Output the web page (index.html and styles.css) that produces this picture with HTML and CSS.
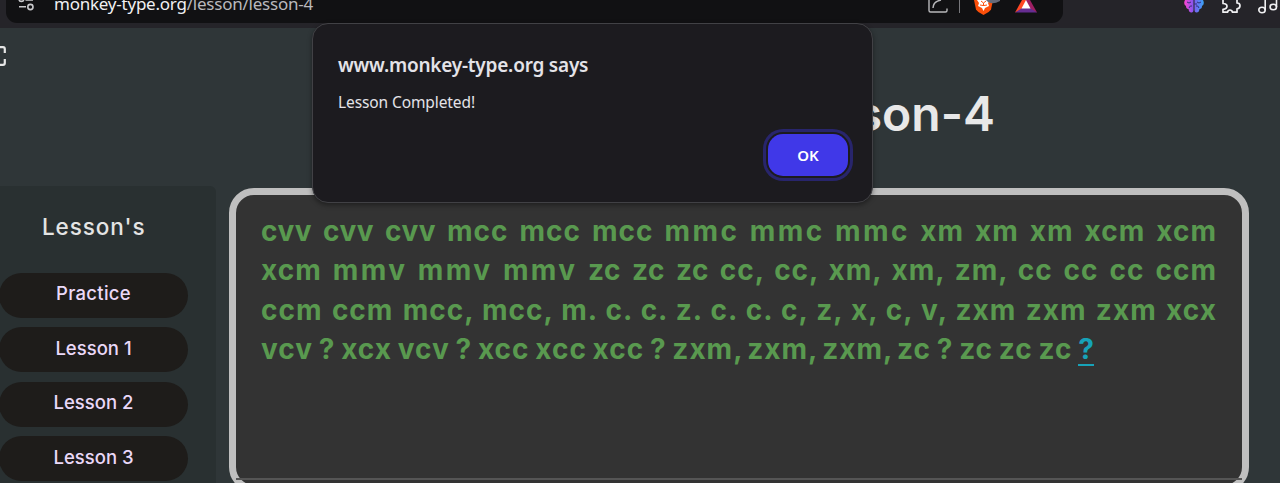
FILE: index.html
```html
<!DOCTYPE html>
<html lang="en">
<head>
<meta charset="utf-8">
<title>Lesson-4</title>
<link rel="stylesheet" href="styles.css">
</head>
<body>
<header class="toolbar">
  <div class="address">
    <svg class="tune" width="17" height="12" viewBox="0 0 17 12" fill="none" stroke="#c9c9cc" stroke-width="1.6"><circle cx="3.4" cy="-1" r="2.4"/><path d="M7.5 0H15M1 6.8H8"/><circle cx="12.4" cy="7" r="2.6"/></svg>
    <span class="url">monkey-type.org<span class="path">/lesson/lesson-4</span></span>
    <svg class="share" width="20" height="14" viewBox="0 0 20 14" fill="none" stroke="#b8b8bb" stroke-width="1.4"><path d="M1 0V10.5Q1 12 2.5 12H17.5Q19 12 19 10.5V8.5M5 8C5 4 8 1 13 0"/></svg>
    <span class="divider"></span>
    <svg class="shield" width="29" height="16" viewBox="0 0 29 16"><path d="M0 0L2 9.5Q3 11.5 9.500 15Q16 11.500 17 9.500L19 0Z" fill="#fb4f0a"/><path d="M3 0L5 3L4 6L8 8L9.500 11L11 8L15 6L14 3L16 0Z" fill="#fff"/><path d="M7 1L9.500 3L12 1M6 5L9 5.500M13 5L10 5.500M9.500 3V6" stroke="#fb4f0a" fill="none"/><path d="M12 0Q17 6 26 1V0Z" fill="#666a78"/></svg>
    <svg class="prism" width="22" height="13" viewBox="0 0 22 13"><path d="M7 0L0 12.600L11 8V0Z" fill="#ff4724"/><path d="M15 0L22 12.600L11 8V0Z" fill="#9e1f63"/><path d="M0 12.600H22L15 8H7Z" fill="#662d91"/><path d="M11 0L15.500 8.500H6.500Z" fill="#fff"/></svg>
  </div>
  <svg class="brain" width="20" height="14" viewBox="0 0 20 14"><defs><linearGradient id="bg"><stop offset="0" stop-color="#ff44cf"/><stop offset=".45" stop-color="#8655f0"/><stop offset="1" stop-color="#38a4f5"/></linearGradient></defs><path d="M1 0Q-1 4 2 6Q2 9 4.500 9Q5 13 8 12.500Q9.500 12 9.500 10V0ZM10.500 0V10Q10.500 12 12 12.500Q15 13 15.500 9Q18 9 18 6Q21 4 19 0Z" fill="url(#bg)"/><path d="M3 2Q5 4 7 2M5 8Q6 5 8 6M17 2Q15 4 13 2M15 8Q14 5 12 6M10 4H13" fill="none" stroke="#33317c"/></svg>
  <svg class="puzzle" width="20" height="14" viewBox="0 0 20 14" fill="none" stroke="#f0f0f2" stroke-width="1.700" stroke-linejoin="round"><path d="M2 0V3.500Q6 3.500 6 6.300Q6 9 2 9.300V12.200H6.500Q7 10 9 10Q11 10 11.500 12.200H16V8.800Q19 8.500 19 5.800Q19 3 16 3V0"/></svg>
  <svg class="music" width="22" height="14" viewBox="0 0 22 14" fill="none" stroke="#f0f0f2" stroke-width="1.600"><ellipse cx="4" cy="10" rx="3.200" ry="2.700"/><path d="M7.200 10V0M18.500 7V0"/><ellipse cx="15.300" cy="7" rx="3.200" ry="2.700"/></svg>
</header>

<main class="page">
  <aside class="side">
    <svg class="fullscreen" width="6" height="20" viewBox="0 0 6 20" fill="none" stroke="#e6e6e6" stroke-width="2.200"><path d="M0 1.200H3Q4.800 1.200 4.800 3V7M4.800 13V17Q4.800 18.800 3 18.800H0"/></svg>
    <nav class="lessons">
      <h2 class="lessons-title">Lesson's</h2>
      <button class="lesson practice">Practice</button>
      <button class="lesson">Lesson 1</button>
      <button class="lesson">Lesson 2</button>
      <button class="lesson">Lesson 3</button>
    </nav>
  </aside>
  <section class="content">
    <h1 class="title">Lesson-4</h1>
    <div class="panel">
      <div class="line"><span class="tight">cvv</span><span class="tight">cvv</span><span class="tight">cvv</span><span>mcc</span><span>mcc</span><span>mcc</span><span class="wide">mmc</span><span class="wide">mmc</span><span class="wide">mmc</span><span>xm</span><span>xm</span><span>xm</span><span>xcm</span><span>xcm</span></div>
      <div class="line"><span>xcm</span><span class="wide">mmv</span><span class="wide">mmv</span><span class="wide">mmv</span><span class="tight">zc</span><span class="tight">zc</span><span class="tight">zc</span><span class="p">cc,</span><span class="p">cc,</span><span class="p">xm,</span><span class="p">xm,</span><span class="p">zm,</span><span>cc</span><span>cc</span><span>cc</span><span>ccm</span></div>
      <div class="line"><span>ccm</span><span>ccm</span><span class="p">mcc,</span><span class="p">mcc,</span><span class="p">m.</span><span class="p">c.</span><span class="p">c.</span><span class="p">z.</span><span class="p">c.</span><span class="p">c.</span><span class="p">c,</span><span class="p">z,</span><span class="p">x,</span><span class="p">c,</span><span class="p">v,</span><span>zxm</span><span>zxm</span><span>zxm</span><span>xcx</span></div>
      <div class="line last"><span>vcv</span><span>?</span><span>xcx</span><span>vcv</span><span>?</span><span>xcc</span><span>xcc</span><span>xcc</span><span>?</span><span class="p">zxm,</span><span class="p">zxm,</span><span class="p">zxm,</span><span>zc</span><span>?</span><span>zc</span><span>zc</span><span>zc</span><span class="current">?</span></div>
      <div class="rule"></div>
    </div>
  </section>
</main>

<div class="dialog" role="alertdialog">
  <div class="dialog-title">www.monkey-type.org says</div>
  <div class="dialog-text">Lesson Completed!</div>
  <button class="ok">OK</button>
</div>
</body>
</html>
```
FILE: styles.css
```css
* { box-sizing: border-box; }
body {
  margin: 0;
  height: 483px;
  overflow: hidden;
  position: relative;
  background: #2f3638;
  font-family: Inter, sans-serif;
}
h1, h2 { margin: 0; }
button { border: 0; padding: 0; font-family: inherit; }
svg { display: block; flex: none; }

.toolbar {
  height: 28px;
  display: flex;
  align-items: flex-start;
  background: #252429;
}
.address {
  width: 1057px;
  height: 23px;
  margin-left: 6px;
  padding-left: 12px;
  display: flex;
  background: #111113;
  border-radius: 0 0 11px 11px;
}
.url {
  width: 260px;
  margin: -9px 0 0 19px;
  font: 17px/25px "Noto Sans", sans-serif;
  letter-spacing: -0.23px;
  color: #f0f0f2;
  white-space: nowrap;
}
.path { color: #b9b9bd; }
.share { margin-left: 614px; }
.divider { width: 1px; height: 13px; margin-left: 11px; background: #77777b; }
.shield { margin-left: 14px; }
.prism { margin-left: 12px; }
.brain { margin-left: 121px; }
.puzzle { margin-left: 17px; }
.music { margin-left: 17px; }

.page { display: flex; height: 455px; }
.side { width: 216px; flex: none; }
.fullscreen { margin-top: 18px; }
.lessons {
  height: 300px;
  margin-top: 120px;
  padding-top: 25px;
  display: flex;
  flex-direction: column;
  background: #293031;
  border-radius: 0 6px 0 0;
}
.lessons-title {
  margin: 0 0 30px 42px;
  font-size: 22.5px;
  line-height: 32px;
  font-weight: 500;
  letter-spacing: 0.9px;
  color: #e4e4e4;
}
.lesson {
  flex: none;
  width: 189px;
  height: 45px;
  margin: 0 0 9.400px -1px;
  padding-bottom: 4px;
  border-radius: 23px;
  background: #1e1c1a;
  color: #ead8f8;
  font-size: 18.5px;
  font-weight: 450;
}
.practice { padding-bottom: 5px; letter-spacing: 0.3px; }

.content {
  width: 1020px;
  flex: none;
  margin-left: 13px;
  display: flex;
  flex-direction: column;
}
.title {
  flex: none;
  height: 160px;
  padding: 56px 254px 0 0;
  text-align: right;
  font-size: 48px;
  line-height: 60px;
  font-weight: 600;
  color: #e8e8e8;
}
.panel {
  flex: none;
  height: 304px;
  padding-top: 16px;
  display: flex;
  flex-direction: column;
  border: 7px solid #bfbfbf;
  border-radius: 25px;
  background: #333;
}
.line {
  width: 956px;
  height: 39.300px;
  flex: none;
  margin-left: 25px;
  display: flex;
  justify-content: space-between;
  font-size: 28px;
  line-height: 40px;
  font-weight: 750;
  letter-spacing: 1px;
  color: #59994f;
}
.tight { letter-spacing: 0.5px; }
.wide { letter-spacing: 2.4px; margin-right: -0.5px; }
.p { margin-right: -2px; }
.last { width: 833px; }
.current {
  height: 37px;
  color: #17a2b8;
  border-bottom: 2px solid #17a2b8;
  letter-spacing: 0;
}
.rule { height: 2px; margin-top: 110px; background: #555; }

.dialog {
  position: absolute;
  left: 312px;
  top: 23px;
  width: 561px;
  height: 180px;
  padding: 27px 25px 0;
  display: flex;
  flex-direction: column;
  border: 1px solid #414145;
  border-radius: 16px;
  background: #1c1b1f;
  box-shadow: 0 2px 5px rgba(0, 0, 0, .4);
  font-family: "Noto Sans", sans-serif;
  color: #e4e3e8;
  white-space: nowrap;
}
.dialog-title { font-size: 19px; line-height: 28px; font-weight: 600; letter-spacing: -0.22px; }
.dialog-text { margin-top: 12px; font-size: 15.5px; line-height: 22px; letter-spacing: -0.1px; }
.ok {
  align-self: flex-end;
  width: 80px;
  height: 42px;
  margin-top: 21px;
  margin-right: -1px;
  border-radius: 15px;
  background: #4038e8;
  box-shadow: 0 0 0 2px #1c1b1f, 0 0 0 5px #28256c;
  color: #fff;
  font-size: 15px;
  font-weight: 600;
}
```
